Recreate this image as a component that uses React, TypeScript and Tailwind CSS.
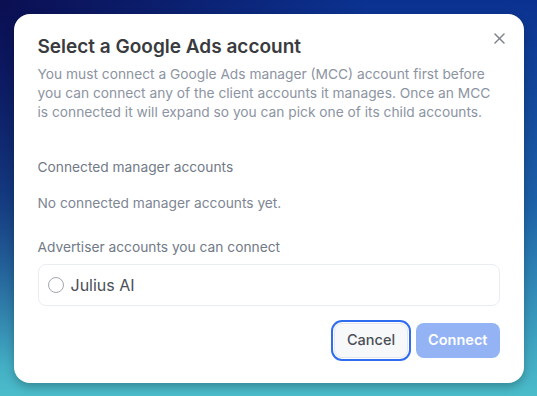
import React from 'react';

export default function App() {
  return (
    <div
      className="w-full h-[396px] flex items-center justify-center bg-[radial-gradient(circle_at_0%_0%,#0b0f52_0%,rgba(11,15,82,0)_55%),linear-gradient(180deg,#0b3190_0%,#1c5fa7_50%,#4bbdca_100%)]"
      style={{ fontFamily: 'Inter, "Liberation Sans", sans-serif' }}
    >
      <div className="relative w-[510px] rounded-2xl bg-white px-6 pt-[19px] pb-[25px] shadow-[0_4px_10px_rgba(0,0,0,0.25)]">
        <button className="absolute right-[18px] top-[19px] w-[12px] h-[12px] flex items-center justify-center">
          <svg width="11" height="11" viewBox="0 0 11 11" fill="none" stroke="#7f838b" strokeWidth="1.5" strokeLinecap="round">
            <line x1="1" y1="1" x2="10" y2="10" />
            <line x1="10" y1="1" x2="1" y2="10" />
          </svg>
        </button>

        <h2 className="text-[19px] leading-[28px] font-semibold text-[#393b3e]">Select a Google Ads account</h2>
        <p className="mt-1 text-[13.75px] leading-[19px] text-[#8c94a2]">
          You must connect a Google Ads manager (MCC) account first before you can connect any of the client accounts it manages. Once an MCC is connected it will expand so you can pick one of its child accounts.
        </p>

        <div className="mt-[35px] text-[13.75px] leading-5 text-[#727a87]">Connected manager accounts</div>
        <div className="mt-4 text-[13.75px] leading-5 text-[#7e8693]">No connected manager accounts yet.</div>

        <div className="mt-6 text-[13.75px] leading-5 text-[#727a87]">Advertiser accounts you can connect</div>
        <label className="mt-[7px] flex items-center gap-[7px] rounded-lg border border-[#e9edf3] pl-[9px] py-[9px]">
          <span className="w-[16px] h-[16px] rounded-full border-[1.5px] border-[#a3a7ae] bg-white" />
          <span className="text-base leading-[22px] text-[#4a4e55]">Julius AI</span>
        </label>

        <div className="mt-[17px] flex justify-end gap-2">
          <button className="h-[35px] px-3 rounded-lg border border-[#e3e6eb] bg-[#f7f8fa] text-[14.5px] font-medium text-[#4a4e55] outline-2 outline-offset-1 outline-[#2f6cf0]">
            Cancel
          </button>
          <button className="h-[35px] px-3 rounded-lg bg-[#93b3f5] text-[14.5px] font-semibold text-white">
            Connect
          </button>
        </div>
      </div>
    </div>
  );
}
